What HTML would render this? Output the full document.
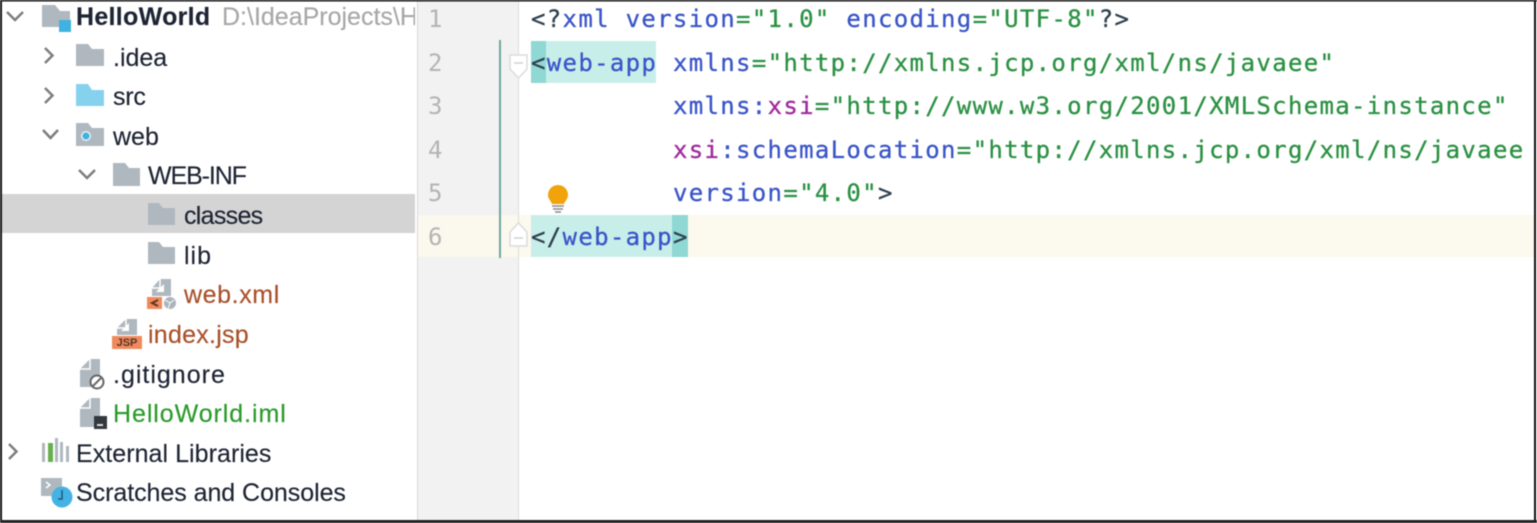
<!DOCTYPE html>
<html><head><meta charset="utf-8"><style>
html,body{margin:0;padding:0;background:#fff}
#p{position:relative;width:1537px;height:523px;overflow:hidden;background:#fff;filter:blur(.45px)}
.t{position:absolute;font:25px/40px "Liberation Sans",sans-serif;color:#1d2433;white-space:pre;-webkit-text-stroke:.15px currentColor}
.c{position:absolute;left:531px;font:24px/43px "DejaVu Sans Mono",monospace;letter-spacing:1.32px;white-space:pre;color:#2f3f4f;-webkit-text-stroke:.3px currentColor}
.n{position:absolute;left:428px;width:16px;font:24px/43px "DejaVu Sans Mono",monospace;color:#b4b4b4}
.b{position:absolute}
i{font-style:normal}
.k{color:#3a55c8}.s{color:#2b9143}.m{color:#a02a9c}
svg{position:absolute;left:0;top:0}
</style></head><body><div id="p">
<div class="b" style="left:2px;top:194px;width:413px;height:39px;background:#d4d4d4"></div>
<div class="b" style="left:417px;top:0;width:101px;height:523px;background:#f2f2f2"></div>
<div class="b" style="left:417px;top:0;width:1px;height:523px;background:#d8d8d8"></div>
<div class="b" style="left:518px;top:0;width:1px;height:523px;background:#dcdcdc"></div>
<div class="b" style="left:418px;top:215px;width:100px;height:42px;background:#fbf8ee"></div>
<div class="b" style="left:519px;top:215px;width:1016px;height:42px;background:#fcf9ee"></div>
<div class="b" style="left:531px;top:41px;width:125px;height:42px;background:#c8eeea"></div>
<div class="b" style="left:531px;top:41px;width:15px;height:42px;background:#8fd8d4"></div>
<div class="b" style="left:531px;top:215px;width:157px;height:42px;background:#c8eeea"></div>
<div class="b" style="left:672px;top:215px;width:16px;height:42px;background:#8fd8d4"></div>
<div class="b" style="left:499px;top:40px;width:2px;height:218px;background:#6fa79f"></div>

<svg width="1537" height="523" fill="none">
<!-- arrows -->
<g stroke="#7d7d7d" stroke-width="2.500">
<path d="M7 12l8 8 8-8M45 48l7.500 7.500-7.500 7.500M45 88l7.500 7.500-7.500 7.500M43 130l7.500 8 7.500-8M79 170l8 8 8-8M9 444l7.500 7.500-7.500 7.500"/>
</g>
<!-- folders -->
<g fill="#afb8bf">
<path d="M42 5h13l5 6h10v16H42z"/>
<path d="M76 44h12l4 5h12v17H76z"/>
<path d="M76 123h12l4 5h12v18H76z"/>
<path d="M113 163h12l4 5h11v18h-27z"/>
<path d="M148 203h11l4 5h12v17h-27z"/>
<path d="M148 242h11l4 5h12v17h-27z"/>
<!-- file bodies -->
<path d="M160 279h11v17h-19v-8z"/>
<path d="M126 319h11v16h-20v-7z"/>
<path d="M90 359h10v28H80v-18z"/>
<path d="M90 398h10v29H80v-19z"/>
</g>
<!-- fold notches -->
<g fill="#fff">
<path d="M156 292h8v-8z"/>
<path d="M121 331h8v-8z"/>
</g>
<g stroke="#fff" stroke-width="1.500">
<path d="M160 279v9h-9M126 319v9h-9M90 359v10H80M90 398v10H80"/>
</g>
<path d="M76 84h12l4 6h12v16H76z" fill="#86d2ee"/>
<rect x="59" y="20" width="12" height="12" fill="#3fb2e2"/>
<circle cx="86" cy="136" r="5" fill="#e8f0f3"/><circle cx="86" cy="136" r="3.500" fill="#3fb2e2"/>
<!-- web.xml badge -->
<rect x="147" y="297" width="15" height="12" fill="#f08a5d"/>
<path d="M158 300l-6 3 6 3" stroke="#5a3526" stroke-width="2"/>
<circle cx="170" cy="303" r="6.500" fill="#aab4bb" stroke="#fff"/>
<path d="M165 300l5 3 4-3M168 309l2-6" stroke="#fff"/>
<!-- jsp badge -->
<rect x="112" y="336" width="30" height="13" fill="#f08a5d"/>
<!-- gitignore badge -->
<circle cx="97" cy="382" r="6.500" fill="#fff" stroke="#666" stroke-width="2"/>
<path d="M93 386l8-8" stroke="#666" stroke-width="2"/>
<!-- iml badge -->
<rect x="94" y="416" width="13" height="13" fill="#33383d"/>
<rect x="97" y="424" width="6" height="2" fill="#ddd"/>
<!-- libs -->
<rect x="42" y="443" width="3" height="19" fill="#afb8bf"/>
<rect x="48" y="443" width="5" height="19" fill="#67b04d"/>
<rect x="55" y="438" width="3" height="24" fill="#afb8bf"/>
<rect x="60" y="442" width="3" height="20" fill="#afb8bf"/>
<rect x="66" y="446" width="3" height="16" fill="#afb8bf"/>
<!-- scratches -->
<path d="M41 478h21v12l-10 6H41z" fill="#afb8bf"/>
<path d="M46 482l4 3-4 3" stroke="#fff" stroke-width="1.500"/>
<circle cx="62" cy="497" r="10.500" fill="#44b3e3"/>
<path d="M62 490v9h-4" stroke="#1f5a78" stroke-width="1.500"/>
<!-- fold markers -->
<path d="M510 55h17v14l-8.500 9-8.500-9z" fill="#fff" stroke="#dcdcdc" stroke-width="1.500"/>
<path d="M514 63h9" stroke="#d0d0d0" stroke-width="1.500"/>
<path d="M510 246v-14l8.500-9 8.500 9v14z" fill="#fff" stroke="#dcdcdc" stroke-width="1.500"/>
<path d="M514 238h9" stroke="#d0d0d0" stroke-width="1.500"/>
<!-- bulb -->
<path d="M558 185a10 10 0 0 1 10 10c0 4-3 6-4 9h-12c-1-3-4-5-4-9a10 10 0 0 1 10-10z" fill="#f0a30a"/>
<path d="M552 206h12M553 209h10M555 212h6" stroke="#8a8a8a" stroke-width="1.500"/>
<!-- frame -->
<path d="M0 .5h1537M1 0v523M1535 0v523" stroke="#111" stroke-width="2"/>
<rect x="0" y="520" width="1537" height="3" fill="#222"/>
</svg>
<span class="b" style="left:112px;top:336px;width:30px;text-align:center;font:bold 11px/14px 'Liberation Sans',sans-serif;color:#5a3526">JSP</span>

<span class="t" style="left:76px;top:-3px;font-weight:bold;letter-spacing:.3px">HelloWorld</span>
<span class="t" style="left:222px;top:-3px;color:#a8a8a8;width:193px;overflow:hidden;display:block">D:\IdeaProjects\HelloWorld</span>
<span class="t" style="left:113px;top:38px">.idea</span>
<span class="t" style="left:113px;top:77px;letter-spacing:-.2px">src</span>
<span class="t" style="left:113px;top:117px">web</span>
<span class="t" style="left:148px;top:156px;letter-spacing:-1.1px">WEB-INF</span>
<span class="t" style="left:184px;top:196px;letter-spacing:-.7px">classes</span>
<span class="t" style="left:184px;top:236px;letter-spacing:1px">lib</span>
<span class="t" style="left:184px;top:275px;color:#a8502a;letter-spacing:.6px">web.xml</span>
<span class="t" style="left:148px;top:315px;color:#a8502a;letter-spacing:.25px">index.jsp</span>
<span class="t" style="left:113px;top:355px;letter-spacing:1px">.gitignore</span>
<span class="t" style="left:113px;top:394px;color:#2a9a2a;letter-spacing:.93px">HelloWorld.iml</span>
<span class="t" style="left:76px;top:434px;letter-spacing:.05px">External Libraries</span>
<span class="t" style="left:76px;top:473px;letter-spacing:-.05px">Scratches and Consoles</span>

<span class="n" style="top:-2px">1</span>
<span class="n" style="top:42px">2</span>
<span class="n" style="top:85px">3</span>
<span class="n" style="top:129px">4</span>
<span class="n" style="top:172px">5</span>
<span class="n" style="top:216px">6</span>

<div class="c" style="top:-2px">&lt;?<i class="k">xml version</i><i class="s">="1.0"</i> <i class="k">encoding</i><i class="s">="UTF-8"</i>?&gt;</div>
<div class="c" style="top:42px">&lt;<i class="k">web-app</i> <i class="k">xmlns</i><i class="s">="http://xmlns.jcp.org/xml/ns/javaee"</i></div>
<div class="c" style="top:85px">         <i class="k">xmlns:</i><i class="m">xsi</i><i class="s">="http://www.w3.org/2001/XMLSchema-instance"</i></div>
<div class="c" style="top:129px">         <i class="m">xsi</i><i class="k">:schemaLocation</i><i class="s">="http://xmlns.jcp.org/xml/ns/javaee</i></div>
<div class="c" style="top:172px">         <i class="k">version</i><i class="s">="4.0"</i>&gt;</div>
<div class="c" style="top:216px">&lt;/<i class="k">web-app</i>&gt;</div>
</div></body></html>
